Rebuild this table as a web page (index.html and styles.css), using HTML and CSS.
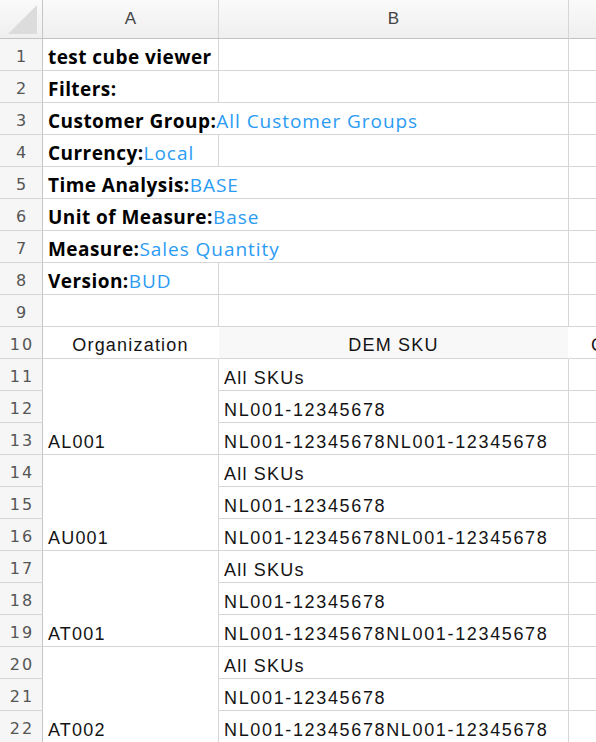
FILE: index.html
```html
<!DOCTYPE html>
<html>
<head>
<meta charset="utf-8">
<link rel="stylesheet" href="styles.css">
</head>
<body>
<div class="sheet">
  <div class="cell corner"><span class="tri"></span></div>
  <div class="cell colhead">A</div>
  <div class="cell colhead">B</div>
  <div class="cell colhead last"></div>

  <div class="cell rownum">1</div>
  <div class="cell a bold">test cube viewer</div>
  <div class="cell b"></div>
  <div class="cell c"></div>

  <div class="cell rownum">2</div>
  <div class="cell a bold">Filters:</div>
  <div class="cell b"></div>
  <div class="cell c"></div>

  <div class="cell rownum">3</div>
  <div class="cell a wide bold">Customer Group:<span class="val">All Customer Groups</span></div>
  <div class="cell c"></div>

  <div class="cell rownum">4</div>
  <div class="cell a bold">Currency:<span class="val">Local</span></div>
  <div class="cell b"></div>
  <div class="cell c"></div>

  <div class="cell rownum">5</div>
  <div class="cell a wide bold">Time Analysis:<span class="val">BASE</span></div>
  <div class="cell c"></div>

  <div class="cell rownum">6</div>
  <div class="cell a wide bold">Unit of Measure:<span class="val">Base</span></div>
  <div class="cell c"></div>

  <div class="cell rownum">7</div>
  <div class="cell a wide bold">Measure:<span class="val">Sales Quantity</span></div>
  <div class="cell c"></div>

  <div class="cell rownum">8</div>
  <div class="cell a bold">Version:<span class="val">BUD</span></div>
  <div class="cell b"></div>
  <div class="cell c"></div>

  <div class="cell rownum">9</div>
  <div class="cell a"></div>
  <div class="cell b"></div>
  <div class="cell c"></div>

  <div class="cell rownum">10</div>
  <div class="cell a head center">Organization</div>
  <div class="cell b head center shaded">DEM SKU</div>
  <div class="cell c head">Customer</div>

  <div class="cell rownum">11</div>
  <div class="cell a org data">AL001</div>
  <div class="cell b data">All SKUs</div>
  <div class="cell c"></div>
  <div class="cell rownum">12</div>
  <div class="cell b data code">NL001-12345678</div>
  <div class="cell c"></div>
  <div class="cell rownum">13</div>
  <div class="cell b data code">NL001-12345678NL001-12345678</div>
  <div class="cell c"></div>

  <div class="cell rownum">14</div>
  <div class="cell a org data">AU001</div>
  <div class="cell b data">All SKUs</div>
  <div class="cell c"></div>
  <div class="cell rownum">15</div>
  <div class="cell b data code">NL001-12345678</div>
  <div class="cell c"></div>
  <div class="cell rownum">16</div>
  <div class="cell b data code">NL001-12345678NL001-12345678</div>
  <div class="cell c"></div>

  <div class="cell rownum">17</div>
  <div class="cell a org data">AT001</div>
  <div class="cell b data">All SKUs</div>
  <div class="cell c"></div>
  <div class="cell rownum">18</div>
  <div class="cell b data code">NL001-12345678</div>
  <div class="cell c"></div>
  <div class="cell rownum">19</div>
  <div class="cell b data code">NL001-12345678NL001-12345678</div>
  <div class="cell c"></div>

  <div class="cell rownum">20</div>
  <div class="cell a org data">AT002</div>
  <div class="cell b data">All SKUs</div>
  <div class="cell c"></div>
  <div class="cell rownum">21</div>
  <div class="cell b data code">NL001-12345678</div>
  <div class="cell c"></div>
  <div class="cell rownum">22</div>
  <div class="cell b data code">NL001-12345678NL001-12345678</div>
  <div class="cell c"></div>
</div>
</body>
</html>
```

FILE: styles.css
```css
html, body {
  margin: 0;
  padding: 0;
  background: #ffffff;
  overflow: hidden;
}

.sheet {
  display: grid;
  grid-template-columns: 43px 176px 350px 120px;
  grid-template-rows: 39px;
  grid-auto-rows: 32px;
  width: 689px;
}

.cell {
  box-sizing: border-box;
  border-right: 1px solid #d6d6d6;
  border-bottom: 1px solid #d6d6d6;
  display: flex;
  align-items: flex-end;
  white-space: nowrap;
  min-width: 0;
  overflow: visible;
}

.corner,
.colhead {
  background: linear-gradient(#fafafa, #efefef);
  border-bottom: 1px solid #c3c3c3;
}

.corner {
  border-right: 1px solid #c6c6c6;
  position: relative;
}

.tri {
  position: absolute;
  left: 8px;
  top: 5px;
  width: 29px;
  height: 29px;
  background: #dcdcdc;
  clip-path: polygon(100% 0, 100% 100%, 0 100%);
}

.colhead {
  align-items: center;
  justify-content: center;
  font-family: "Liberation Sans", Arial, sans-serif;
  font-size: 17px;
  color: #444444;
  padding-bottom: 1px;
}

.colhead.last {
  border-right: none;
}

.rownum {
  background: #f6f6f6;
  border-right: 1px solid #c6c6c6;
  justify-content: center;
  font-family: "DejaVu Sans", sans-serif;
  font-size: 16px;
  letter-spacing: 2px;
  line-height: 20px;
  padding-left: 2px;
  padding-bottom: 3px;
  color: #555555;
}

.a {
  padding-left: 5px;
}

.b {
  padding-left: 5px;
}

.c {
  border-right: none;
}

.wide {
  grid-column: span 2;
}

.bold {
  font-family: "Open Sans", sans-serif;
  font-weight: 700;
  font-size: 19px;
  letter-spacing: 0.45px;
  line-height: 24px;
  padding-bottom: 1px;
  color: #000000;
}

.val {
  font-weight: 400;
  letter-spacing: 0.95px;
  color: #2b9bf4;
}

.data,
.head {
  font-family: "Liberation Sans", Arial, sans-serif;
  font-size: 18px;
  line-height: 22px;
  letter-spacing: 1.2px;
  color: #141414;
  padding-bottom: 1px;
}

.code {
  letter-spacing: 1.65px;
}

.head {
  padding-bottom: 2px;
}

.center {
  justify-content: center;
  padding-left: 0;
  border-right-color: #ffffff;
}

.shaded {
  background: #f8f8f8;
}

.c.head {
  padding-left: 22px;
}

.org {
  grid-row: span 3;
}
```
